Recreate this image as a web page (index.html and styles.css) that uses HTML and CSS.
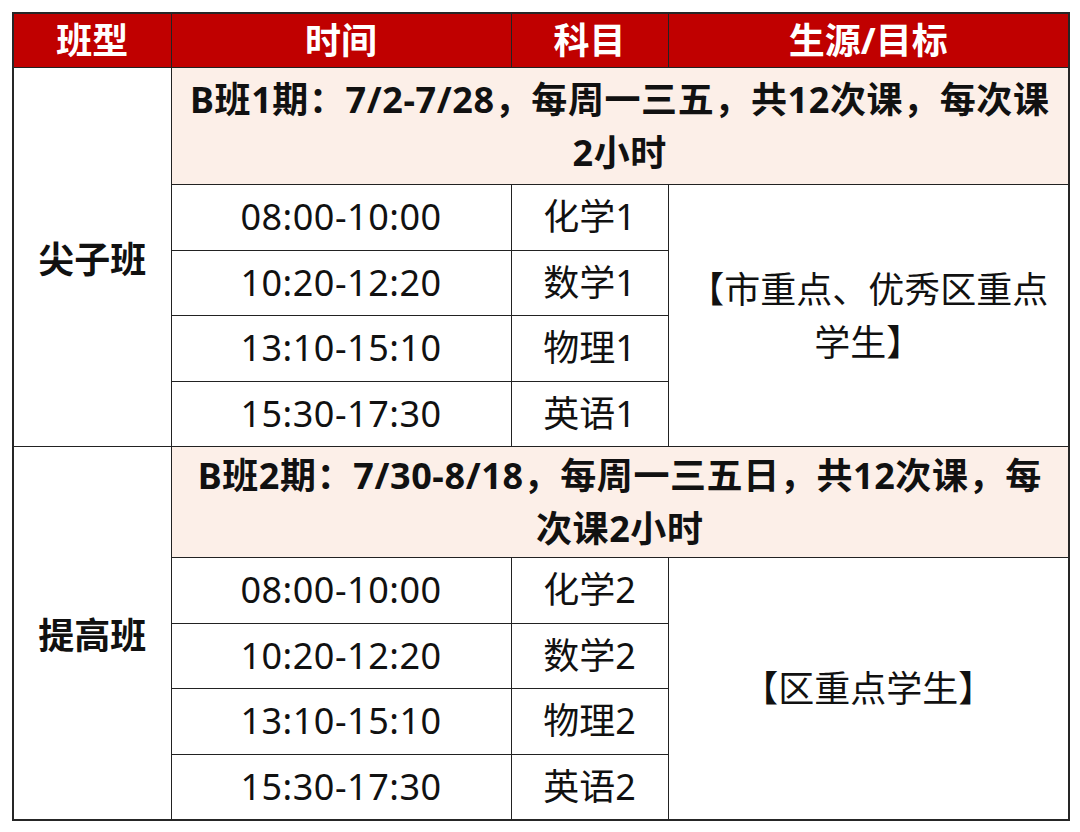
FILE: index.html
```html
<!DOCTYPE html>
<html lang="zh-CN">
<head>
<meta charset="utf-8">
<link rel="stylesheet" href="styles.css">
</head>
<body>
<div class="page">
<table class="schedule">
  <colgroup>
    <col class="c1"><col class="c2"><col class="c3"><col class="c4">
  </colgroup>
  <thead>
    <tr class="head">
      <th>班型</th><th>时间</th><th>科目</th><th>生源/目标</th>
    </tr>
  </thead>
  <tbody>
    <tr class="banner b1">
      <td class="type" rowspan="5">尖子班</td>
      <td class="note" colspan="3">B班1期：7/2-7/28，每周一三五，共12次课，每次课<br>2小时</td>
    </tr>
    <tr class="row"><td class="time">08:00-10:00</td><td>化学1</td><td class="target" rowspan="4">【市重点、优秀区重点学生】</td></tr>
    <tr class="row"><td class="time">10:20-12:20</td><td>数学1</td></tr>
    <tr class="row"><td class="time">13:10-15:10</td><td>物理1</td></tr>
    <tr class="row"><td class="time">15:30-17:30</td><td>英语1</td></tr>
    <tr class="banner b2">
      <td class="type" rowspan="5">提高班</td>
      <td class="note" colspan="3">B班2期：7/30-8/18，每周一三五日，共12次课，每<br>次课2小时</td>
    </tr>
    <tr class="row"><td class="time">08:00-10:00</td><td>化学2</td><td class="target" rowspan="4">【区重点学生】</td></tr>
    <tr class="row"><td class="time">10:20-12:20</td><td>数学2</td></tr>
    <tr class="row"><td class="time">13:10-15:10</td><td>物理2</td></tr>
    <tr class="row"><td class="time">15:30-17:30</td><td>英语2</td></tr>
  </tbody>
</table>
</div>
</body>
</html>
```
FILE: styles.css
```css
html, body {
  margin: 0;
  padding: 0;
  background: #ffffff;
}
.page {
  padding: 12px 0 0 12px;
}
.schedule {
  border-collapse: collapse;
  table-layout: fixed;
  width: 1056px;
  border: 2px solid #262626;
  font-family: "Noto Sans", "Noto Sans CJK SC", sans-serif;
  color: #111111;
}
.c1 { width: 158px; }
.c2 { width: 340px; }
.c3 { width: 157px; }
.c4 { width: 401px; }
.schedule th,
.schedule td {
  border: 1px solid #222222;
  padding: 0;
  text-align: center;
  vertical-align: middle;
}
.head th {
  background: #c00000;
  color: #ffffff;
  font-weight: 700;
  font-size: 36px;
  height: 53px;
  line-height: 40px;
}
.banner .note {
  background: #fcefe8;
  font-weight: 700;
  font-size: 36px;
  line-height: 53px;
  letter-spacing: 0.6px;
  white-space: nowrap;
}
.b1 .note { height: 116px; }
.b2 .note { height: 110px; }
.type {
  font-weight: 700;
  font-size: 36px;
}
.row td {
  height: 64.5px;
  font-size: 36px;
  line-height: 40px;
}
.row td.time {
  letter-spacing: 0.5px;
}
.row td.target {
  padding: 0 14px;
  line-height: 53px;
}
```
